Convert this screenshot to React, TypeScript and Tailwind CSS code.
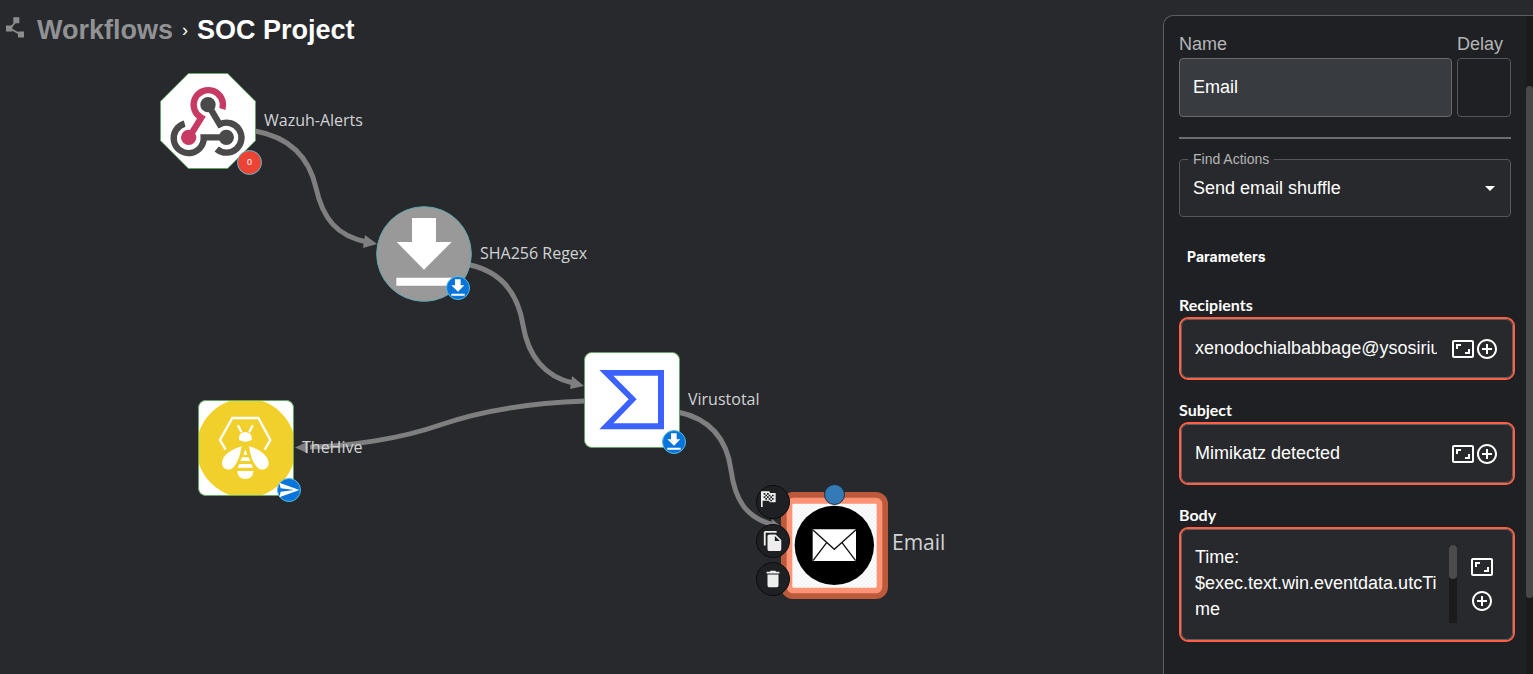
import React from "react";
import { MdAddCircleOutline, MdArrowDropDown, MdAspectRatio, MdDelete, MdFileCopy } from "react-icons/md";

function BreadcrumbIcon() {
  return (
    <svg viewBox="0 0 54 62" className="mb-1.5 h-[21px] w-[18px] shrink-0" fill="#8c8d8f" aria-hidden="true">
      <path d="M22 0h18v18H22zM0 25h19v18H0zM36 43h18v18H36z" />
      <path d="M30 12 12 34 44 52" fill="none" stroke="#8c8d8f" strokeWidth="5" />
    </svg>
  );
}

function Edges() {
  return (
    <svg className="absolute inset-0 h-full w-full" aria-hidden="true">
      <g fill="none" stroke="#7f7f7f" strokeWidth="5">
        <path d="M255 131 C289 137 309 157 316 188 S337 236 367 242" />
        <path d="M470 265 C502 272 518 294 523 325 S545 377 573 383" />
        <path d="M585 401 C530 403 480 411 440 425 S350 446 310 447" />
        <path d="M678 412 C711 419 727 440 731 470 S746 518 774 525" />
      </g>
      <g fill="#7f7f7f">
        <path d="M377 244 365 235 363 248Z" />
        <path d="M584 386 572 376 570 389Z" />
        <path d="M295 447.500 308 441.500 308 453.500Z" />
        <path d="M784 529 772 519 770 530Z" />
      </g>
    </svg>
  );
}

function DownloadBadge({ className }: { className: string }) {
  return (
    <svg viewBox="0 0 72 72" className={`absolute h-6 w-6 ${className}`} aria-hidden="true">
      <circle cx="36" cy="36" r="34.500" fill="#0874dc" stroke="#58bcd4" strokeWidth="3" />
      <path d="M27 10h17v18h11L36 47 16 28h11zM16 53h40v6H16z" fill="#fff" />
    </svg>
  );
}

function WebhookNode() {
  return (
    <svg viewBox="0 0 288 288" className="h-24 w-24 shrink-0" aria-hidden="true">
      <path d="M85 1.500H203L286.500 85V203L203 286.500H85L1.500 203V85Z" fill="#fff" stroke="#62a765" strokeWidth="3" />
      <g fill="none" strokeWidth="19">
        <path d="M144 95 179 154 A45 45 0 1 1 170 228" stroke="#4a4a4a" />
        <path d="M199 193H131 A45 45 0 1 1 74 152" stroke="#4a4a4a" />
        <path d="M187 108 A44 44 0 1 0 124 134 L86 195" stroke="#c73a63" />
      </g>
      <circle cx="144" cy="95" r="23" fill="#4a4a4a" />
      <circle cx="199" cy="193" r="23" fill="#4a4a4a" />
      <circle cx="86" cy="193" r="23" fill="#c73a63" />
    </svg>
  );
}

function RegexNode() {
  return (
    <svg viewBox="0 0 288 288" className="h-24 w-24 shrink-0" aria-hidden="true">
      <circle cx="144" cy="144" r="142" fill="#999" stroke="#5fa8b0" strokeWidth="3" />
      <path d="M108 36h72v72h47L144 191 62 108h46zM61 215h166v24H61z" fill="#fff" />
    </svg>
  );
}

function VirustotalNode() {
  return (
    <svg viewBox="0 0 288 288" className="h-24 w-24 shrink-0" aria-hidden="true">
      <rect x="1.500" y="1.500" width="285" height="285" rx="22" fill="#fff" stroke="#62a765" strokeWidth="3" />
      <path d="M46 54H240V232H46L134 142ZM88 71 158 142 88 214H222V71Z" fill="#3b61ff" fillRule="evenodd" />
    </svg>
  );
}

function HiveNode() {
  return (
    <svg viewBox="0 0 288 288" className="h-24 w-24 shrink-0" aria-hidden="true">
      <defs>
        <clipPath id="hive-frame">
          <rect x="1" y="1" width="286" height="286" rx="22" />
        </clipPath>
      </defs>
      <rect x="1" y="1" width="286" height="286" rx="22" fill="#fff" />
      <circle cx="144" cy="144" r="149" fill="#f2d02c" clipPath="url(#hive-frame)" />
      <rect x="1.500" y="1.500" width="285" height="285" rx="22" fill="none" stroke="#62a765" strokeWidth="3" />
      <path d="M83 149 66 120 103 54H181L217 120 200 149" fill="none" stroke="#fff" strokeWidth="7" />
      <path d="M121 78 129 94M163 78 155 94" stroke="#fff" strokeWidth="7" strokeLinecap="round" />
      <path d="M123 112a19 16 0 0 1 38 0v8q-19 10-38 0z" fill="#fff" />
      <path d="M131 139C126 166 122 183 108 200 96 215 73 210 72 190 72 166 101 147 131 139Z" fill="#fff" />
      <path d="M153 139C158 166 162 183 176 200 188 215 211 210 212 190 212 166 183 147 153 139Z" fill="#fff" />
      <path d="M142 148 148 164H136ZM132 172h20l5 11h-30zM124 192h36l5 11h-46zM118 213h48c0 15-10 24-24 24s-24-9-24-24z" fill="#fff" />
    </svg>
  );
}

function EmailNode() {
  return (
    <svg viewBox="0 0 321 321" className="h-[107px] w-[107px] shrink-0" aria-hidden="true">
      <defs>
        <pattern id="transparency" width="12" height="12" patternUnits="userSpaceOnUse">
          <path d="M0 0H12V12H0Z" fill="#fcfcfc" />
          <path d="M0 0H6V6H0ZM6 6H12V12H6Z" fill="#f4f4f4" />
        </pattern>
      </defs>
      <rect width="321" height="321" rx="36" fill="#bd5a3c" />
      <rect x="17" y="17" width="287" height="287" rx="20" fill="#fb9374" />
      <rect x="34" y="35" width="253" height="252" rx="4" fill="url(#transparency)" />
      <circle cx="160" cy="160" r="119" fill="#000" />
      <path d="M95 112H225V207H95Z" fill="#fff" />
      <path d="M95 113 160 172 225 113M96 206 137 152M224 206 183 152" fill="none" stroke="#111" strokeWidth="4" />
    </svg>
  );
}

function FlagIcon() {
  return (
    <svg viewBox="0 0 48 48" className="h-4 w-4" aria-hidden="true">
      <path d="M0 1H25L27 6H44V34H26L24 29H5V48H0Z" fill="#eee" />
      <path d="M8 6h5v5H8zM18 6h5v5h-5zM13 11h5v5h-5zM23 11h5v5h-5zM33 11h5v5h-5zM8 16h5v5H8zM18 16h5v5h-5zM28 16h5v5h-5zM13 21h5v5h-5zM23 21h5v5h-5zM33 21h5v5h-5zM28 26h5v5h-5z" fill="#1f2023" />
    </svg>
  );
}

function Label({ children }: { children: React.ReactNode }) {
  return <span className="pb-[3px] font-['Open_Sans','Noto_Sans',sans-serif] text-base whitespace-nowrap text-[#d2d3d4]">{children}</span>;
}

const toolButton =
  "absolute flex h-[34px] w-[34px] items-center justify-center rounded-full border border-[#0c0c0d] bg-[#1f2023] text-[#eee]";

function WorkflowCanvas() {
  return (
    <div className="absolute inset-0 overflow-hidden">
      <Edges />
      <div className="absolute top-[73px] left-[160px] flex items-center gap-2">
        <div className="relative">
          <WebhookNode />
          <span className="absolute top-[77px] left-[77px] flex h-[25px] w-[25px] items-center justify-center rounded-full border border-[#65b5c5] bg-[#ec4335] text-[9px] text-white">
            0
          </span>
        </div>
        <Label>Wazuh-Alerts</Label>
      </div>
      <div className="absolute top-[206px] left-[376px] flex items-center gap-2">
        <div className="relative">
          <RegexNode />
          <DownloadBadge className="top-[70px] left-[70px]" />
        </div>
        <Label>SHA256 Regex</Label>
      </div>
      <div className="absolute top-[352px] left-[584px] flex items-center gap-2">
        <div className="relative">
          <VirustotalNode />
          <DownloadBadge className="top-[78px] left-[78px]" />
        </div>
        <Label>Virustotal</Label>
      </div>
      <div className="absolute top-[400px] left-[198px] flex items-center gap-2">
        <div className="relative">
          <HiveNode />
          <svg viewBox="0 0 72 72" className="absolute top-[78px] left-[79px] h-6 w-6" aria-hidden="true">
            <circle cx="36" cy="36" r="34.500" fill="#0874dc" stroke="#58bcd4" strokeWidth="3" />
            <path d="M7 14 67 36 7 58 11 41 52 36 11 31Z" fill="#fff" />
          </svg>
        </div>
        <Label>TheHive</Label>
      </div>
      <div className="absolute top-[492px] left-[781px] flex items-center gap-1">
        <EmailNode />
        <span className="pb-1.5 font-['Open_Sans','Noto_Sans',sans-serif] text-[21px] text-[#d2d3d4]">Email</span>
      </div>
      <span className="absolute top-[484px] left-[824px] h-[21px] w-[21px] rounded-full border border-[#1c2a38] bg-[#337ab7]" />
      <button type="button" aria-label="Set as start node" className={`${toolButton} top-[485px] left-[756px]`}>
        <span className="mr-2 mb-1.5">
          <FlagIcon />
        </span>
      </button>
      <button type="button" aria-label="Copy node" className={`${toolButton} top-[524px] left-[756px]`}>
        <MdFileCopy size={22} />
      </button>
      <button type="button" aria-label="Delete node" className={`${toolButton} top-[562px] left-[756px]`}>
        <MdDelete size={22} />
      </button>
    </div>
  );
}

const fieldBox = "rounded-[9px] border-2 border-[#ff5f43]";
const fieldInner = "flex items-center rounded-[7px] border border-[#5b5d60] bg-[#27292d] px-[13px]";
const fieldLabel = "block font-['Lato',sans-serif] text-base leading-6 font-bold text-white";

function FieldActions({ name }: { name: string }) {
  return (
    <>
      <button type="button" aria-label={`Expand ${name}`}>
        <MdAspectRatio size={24} />
      </button>
      <button type="button" aria-label={`Autocomplete ${name}`}>
        <MdAddCircleOutline size={24} />
      </button>
    </>
  );
}

function TextField({ id, label, value }: { id: string; label: string; value: string }) {
  return (
    <div>
      <label htmlFor={id} className={fieldLabel}>
        {label}
      </label>
      <div className={fieldBox}>
        <div className={`${fieldInner} h-[59px]`}>
          <input id={id} defaultValue={value} className="mr-3.5 min-w-0 flex-1 bg-transparent pb-0.5 text-lg leading-6 outline-none" />
          <FieldActions name={label} />
        </div>
      </div>
    </div>
  );
}

function ActionPanel() {
  return (
    <aside className="mt-[15px] flex w-[370px] shrink-0 overflow-hidden rounded-tl-[10px] border-t border-l border-[#5c5e61] bg-[#1f2023] text-white">
      <div className="min-w-0 flex-1 pt-4 pr-[11px] pl-[15px]">
        <div className="mr-1 flex gap-[5px]">
          <div className="flex-1">
            <label htmlFor="name" className="mb-0.5 block text-lg leading-6 text-[#b4b5b6]">
              Name
            </label>
            <input
              id="name"
              defaultValue="Email"
              className="h-[59px] w-full rounded border border-[#67696c] bg-[#383b40] px-[13px] text-lg outline-none"
            />
          </div>
          <div className="w-[54px]">
            <label htmlFor="delay" className="mb-0.5 block text-lg leading-6 text-[#b4b5b6]">
              Delay
            </label>
            <input id="delay" className="h-[59px] w-full rounded border border-[#55575a] bg-transparent px-2 text-lg outline-none" />
          </div>
        </div>
        <hr className="mt-5 mr-1 mb-5 h-0.5 border-0 bg-[#6c6d6f]" />
        <div className="relative mr-1 flex items-center rounded border border-[#55575a] bg-[#27292d]">
          <label
            htmlFor="action"
            className="absolute -top-[11px] left-2 bg-linear-to-b from-[#1f2023] from-50% to-[#27292d] to-50% px-[5px] text-sm leading-5 text-[#b4b5b6]"
          >
            Find Actions
          </label>
          <select id="action" className="h-14 w-full appearance-none bg-transparent px-[13px] text-lg outline-none">
            <option>Send email shuffle</option>
          </select>
          <MdArrowDropDown size={24} className="pointer-events-none absolute right-2" />
        </div>
        <h2 className="mt-[30px] mb-[26px] ml-2 font-['Inter',sans-serif] text-sm leading-5 font-bold">Parameters</h2>
        <div className="flex flex-col gap-[18px]">
          <TextField id="recipients" label="Recipients" value="xenodochialbabbage@ysosirius.com" />
          <TextField id="subject" label="Subject" value="Mimikatz detected" />
          <div>
            <label htmlFor="body" className={fieldLabel}>
              Body
            </label>
            <div className={fieldBox}>
              <div className={`${fieldInner} pt-[14px] pb-[15px]`}>
                <textarea
                  id="body"
                  rows={3}
                  defaultValue={"Time: $exec.text.win.eventdata.utcTime"}
                  className="mb-0.5 min-w-0 flex-1 resize-none overflow-hidden bg-transparent text-lg leading-[26px] outline-none"
                />
                <div className="mr-[13px] ml-[3px] h-[78px] w-2 bg-[#1b1b1b]">
                  <div className="h-[34px] rounded-full bg-[#4b4b4b]" />
                </div>
                <div className="mr-[5px] flex flex-col gap-2.5">
                  <FieldActions name="Body" />
                </div>
              </div>
            </div>
          </div>
        </div>
      </div>
      <div className="w-[7px] bg-[#1b1b1b] pt-[70px]">
        <div className="h-[512px] rounded-full bg-[#494949]" />
      </div>
    </aside>
  );
}

export default function App() {
  return (
    <div className="flex min-h-screen bg-[#27292d] font-['Liberation_Sans',Arial,sans-serif]">
      <main className="relative min-w-0 flex-1">
        <WorkflowCanvas />
        <nav aria-label="Breadcrumb" className="relative flex items-center px-1.5 pt-[14px] text-[27px] leading-8 font-bold">
          <BreadcrumbIcon />
          <a href="#workflows" className="ml-[13px] text-[#919294]">
            Workflows
          </a>
          <span className="mx-[9px] text-lg font-normal text-white">›</span>
          <h1 className="text-white">SOC Project</h1>
        </nav>
      </main>
      <ActionPanel />
    </div>
  );
}
